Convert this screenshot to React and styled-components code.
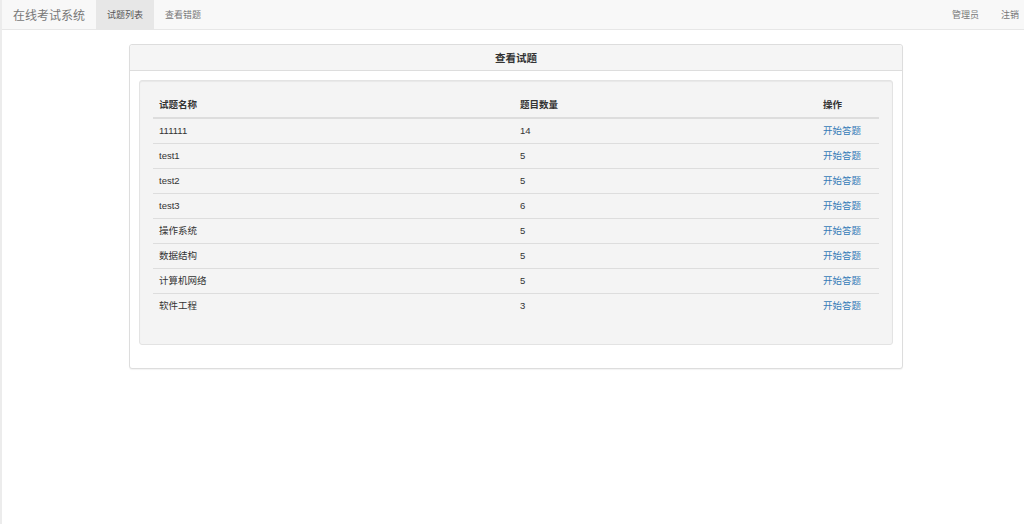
import React from 'react';
import styled, { createGlobalStyle } from 'styled-components';

const GlobalStyle = createGlobalStyle`
  html, body {
    margin: 0;
    padding: 0;
    background: #fff;
  }
  body {
    font-family: "Liberation Sans", "Noto Sans CJK SC", sans-serif;
    font-size: 9.5px;
    color: #333;
  }
`;

const Page = styled.div`
  min-height: 524px;
  border-left: 2px solid #ececec;
  box-sizing: border-box;
`;

const Navbar = styled.nav`
  display: flex;
  align-items: stretch;
  height: 30px;
  background: #f8f8f8;
  border-bottom: 1px solid #e7e7e7;
  box-sizing: border-box;
`;

const Brand = styled.a`
  display: flex;
  align-items: center;
  padding: 0 11px 0 11px;
  font-size: 12px;
  color: #777;
`;

const NavList = styled.div`
  display: flex;
  margin-left: ${(p) => (p.$right ? 'auto' : '0')};
`;

const NavLink = styled.a`
  display: flex;
  align-items: center;
  padding: 0 ${(p) => p.$padRight ?? 11}px 0 11px;
  font-size: 9px;
  color: ${(p) => (p.$active ? '#555' : '#777')};
  background: ${(p) => (p.$active ? '#e7e7e7' : 'transparent')};
`;

const Container = styled.div`
  width: 774px;
  margin: 14px 0 0 127px;
`;

const Panel = styled.div`
  border: 1px solid #ddd;
  border-radius: 3px;
  box-shadow: 0 1px 1px rgba(0, 0, 0, 0.05);
  background: #fff;
`;

const PanelHeading = styled.div`
  height: 25px;
  background: #f5f5f5;
  border-bottom: 1px solid #ddd;
  border-radius: 3px 3px 0 0;
  display: flex;
  align-items: center;
  justify-content: center;
  font-size: 10.5px;
  font-weight: bold;
  color: #333;
`;

const PanelBody = styled.div`
  padding: 9px 9px 23px;
`;

const Well = styled.div`
  background: #f4f4f4;
  border: 1px solid #e3e3e3;
  border-radius: 3px;
  box-shadow: inset 0 1px 1px rgba(0, 0, 0, 0.05);
  padding: 12px 13px 26px;
`;

const Table = styled.table`
  width: 100%;
  border-collapse: collapse;
  table-layout: fixed;
`;

const Th = styled.th`
  text-align: left;
  font-weight: bold;
  padding: 6px;
  height: 12px;
  line-height: 12px;
  border-bottom: 2px solid #ddd;
  color: #333;
`;

const Td = styled.td`
  padding: 6px;
  height: 12px;
  line-height: 12px;
  border-top: ${(p) => (p.$first ? 'none' : '1px solid #ddd')};
  color: #333;
`;

const Link = styled.a`
  color: #337ab7;
  text-decoration: none;
`;

const papers = [
  { name: '111111', count: 14 },
  { name: 'test1', count: 5 },
  { name: 'test2', count: 5 },
  { name: 'test3', count: 6 },
  { name: '操作系统', count: 5 },
  { name: '数据结构', count: 5 },
  { name: '计算机网络', count: 5 },
  { name: '软件工程', count: 3 },
];

export default function App() {
  return (
    <Page>
      <GlobalStyle />
      <Navbar>
        <Brand>在线考试系统</Brand>
        <NavList>
          <NavLink $active>试题列表</NavLink>
          <NavLink>查看错题</NavLink>
        </NavList>
        <NavList $right>
          <NavLink>管理员</NavLink>
          <NavLink $padRight={5}>注销</NavLink>
        </NavList>
      </Navbar>
      <Container>
        <Panel>
          <PanelHeading>查看试题</PanelHeading>
          <PanelBody>
            <Well>
              <Table>
                <colgroup>
                  <col style={{ width: 361 }} />
                  <col style={{ width: 303 }} />
                  <col />
                </colgroup>
                <thead>
                  <tr>
                    <Th>试题名称</Th>
                    <Th>题目数量</Th>
                    <Th>操作</Th>
                  </tr>
                </thead>
                <tbody>
                  {papers.map((p, i) => (
                    <tr key={p.name}>
                      <Td $first={i === 0}>{p.name}</Td>
                      <Td $first={i === 0}>{p.count}</Td>
                      <Td $first={i === 0}>
                        <Link href="#">开始答题</Link>
                      </Td>
                    </tr>
                  ))}
                </tbody>
              </Table>
            </Well>
          </PanelBody>
        </Panel>
      </Container>
    </Page>
  );
}
